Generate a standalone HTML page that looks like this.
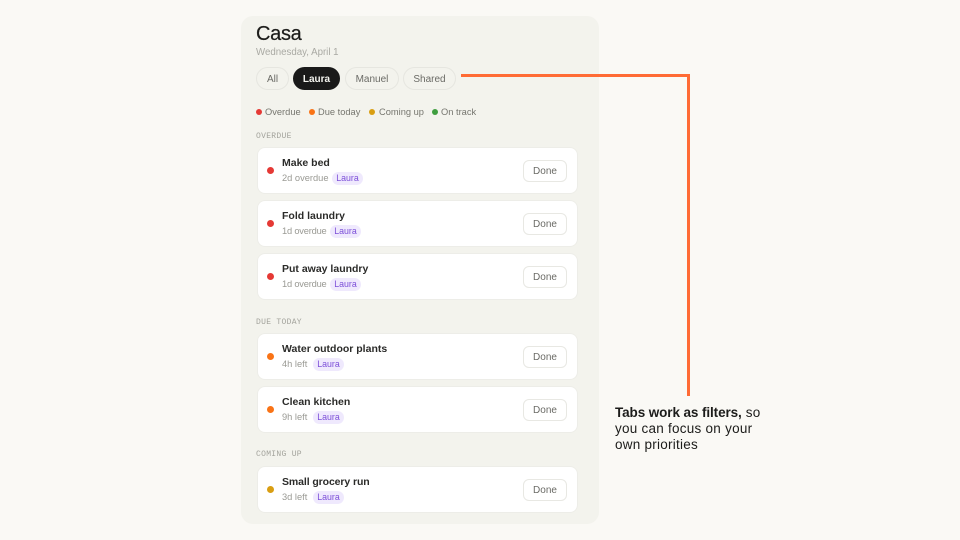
<!DOCTYPE html>
<html><head><meta charset="utf-8">
<style>
html,body{margin:0;padding:0;width:960px;height:540px;overflow:hidden;background:#faf9f5;font-family:"Liberation Sans",sans-serif}
.a{position:absolute;white-space:nowrap}
#panel{left:241px;top:16px;width:358px;height:508px;background:#f3f3ed;border-radius:12px}
.tab{top:67px;height:21px;line-height:23px;border:1px solid #e6e6e0;border-radius:12px;text-align:center;font-size:10px;color:#6b6b66}
.leg{top:106px;font-size:9.3px;line-height:12px;color:#76766f}
.dot{width:6px;height:6px;border-radius:50%}
.sec{left:256px;font-family:"Liberation Mono",monospace;font-size:8px;letter-spacing:.3px;color:#a3a39c;line-height:10px}
.card{left:257px;width:321px;height:47px;box-sizing:border-box;background:#fff;border:1px solid #edede8;border-radius:8px}
.cd{left:267px;width:7px;height:7px;border-radius:50%}
.t{left:282px;font-size:10.5px;font-weight:bold;color:#2b2b29;line-height:14px}
.s{left:282px;font-size:9.3px;color:#9a9a94;line-height:12px}
.tag{height:13px;line-height:13px;width:31px;text-align:center;background:#efe9fd;color:#7c4fd8;font-size:8.8px;border-radius:7px}
.btn{left:523px;width:42px;height:20px;line-height:22px;background:#fff;border:1px solid #e8e8e3;border-radius:6px;text-align:center;font-size:10px;color:#6b6b66}
</style></head><body>
<div class="a" id="panel"></div>
<div class="a" style="left:256px;top:22px;font-size:20px;letter-spacing:-.3px;line-height:24px;color:#1c1c1a;-webkit-text-stroke:.2px #1c1c1a">Casa</div>
<div class="a" style="left:256px;top:46px;font-size:9.7px;line-height:13px;color:#a9a9a3">Wednesday, April 1</div>

<div class="a tab" style="left:256px;width:31px">All</div>
<div class="a tab" style="left:293px;width:45px;background:#1a1a1a;border-color:#1a1a1a;color:#f5f5f0;font-weight:bold">Laura</div>
<div class="a tab" style="left:345px;width:52px">Manuel</div>
<div class="a tab" style="left:403px;width:51px">Shared</div>

<div class="a dot" style="left:256px;top:109px;background:#e53935"></div><div class="a leg" style="left:265px">Overdue</div>
<div class="a dot" style="left:309px;top:109px;background:#f97316"></div><div class="a leg" style="left:318px">Due today</div>
<div class="a dot" style="left:369px;top:109px;background:#d99e12"></div><div class="a leg" style="left:379px">Coming up</div>
<div class="a dot" style="left:432px;top:109px;background:#3f9e3f"></div><div class="a leg" style="left:441px">On track</div>

<div class="a sec" style="top:132px">OVERDUE</div>
<div class="a card" style="top:147px"></div><div class="a cd" style="top:167px;background:#e53935"></div>
<div class="a t" style="top:156px">Make bed</div><div class="a s" style="top:172px">2d overdue</div><div class="a tag" style="left:332px;top:172px">Laura</div><div class="a btn" style="top:160px">Done</div>

<div class="a card" style="top:200px"></div><div class="a cd" style="top:220px;background:#e53935"></div>
<div class="a t" style="top:209px">Fold laundry</div><div class="a s" style="top:225px;letter-spacing:-.2px">1d overdue</div><div class="a tag" style="left:330px;top:225px">Laura</div><div class="a btn" style="top:213px">Done</div>

<div class="a card" style="top:253px"></div><div class="a cd" style="top:273px;background:#e53935"></div>
<div class="a t" style="top:262px">Put away laundry</div><div class="a s" style="top:278px;letter-spacing:-.2px">1d overdue</div><div class="a tag" style="left:330px;top:278px">Laura</div><div class="a btn" style="top:266px">Done</div>

<div class="a sec" style="top:318px">DUE TODAY</div>
<div class="a card" style="top:333px"></div><div class="a cd" style="top:353px;background:#f97316"></div>
<div class="a t" style="top:342px">Water outdoor plants</div><div class="a s" style="top:358px">4h left</div><div class="a tag" style="left:313px;top:358px">Laura</div><div class="a btn" style="top:346px">Done</div>

<div class="a card" style="top:386px"></div><div class="a cd" style="top:406px;background:#f97316"></div>
<div class="a t" style="top:395px">Clean kitchen</div><div class="a s" style="top:411px">9h left</div><div class="a tag" style="left:313px;top:411px">Laura</div><div class="a btn" style="top:399px">Done</div>

<div class="a sec" style="top:450px">COMING UP</div>
<div class="a card" style="top:466px"></div><div class="a cd" style="top:486px;background:#d99e12"></div>
<div class="a t" style="top:475px;letter-spacing:-.1px">Small grocery run</div><div class="a s" style="top:491px">3d left</div><div class="a tag" style="left:313px;top:491px">Laura</div><div class="a btn" style="top:479px">Done</div>

<div class="a" style="left:461px;top:74px;width:229px;height:3px;background:#ff6b35"></div>
<div class="a" style="left:687px;top:74px;width:3px;height:322px;background:#ff6b35"></div>

<div class="a" style="left:615px;top:405px;font-size:13.5px;line-height:16px;color:#1c1c1a;letter-spacing:.25px"><b style="letter-spacing:-.1px">Tabs work as filters,</b> so<br>you can focus on your<br>own priorities</div>
</body></html>
